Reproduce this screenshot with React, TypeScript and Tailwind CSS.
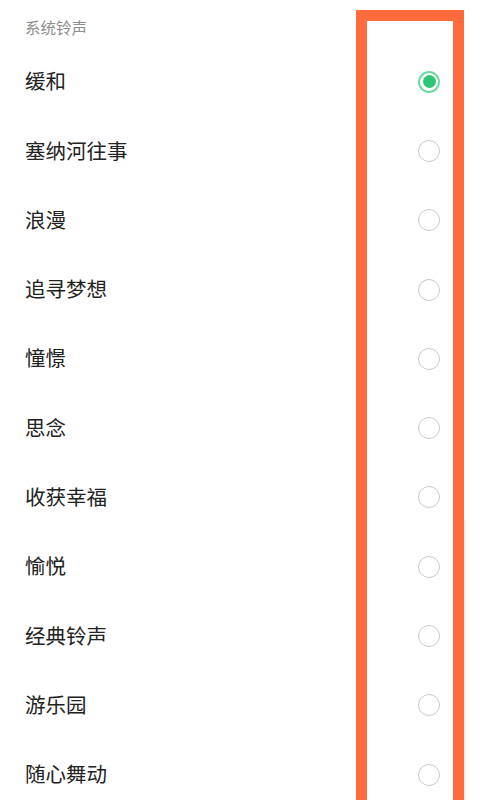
import React from "react";

const tones = [
  "缓和",
  "塞纳河往事",
  "浪漫",
  "追寻梦想",
  "憧憬",
  "思念",
  "收获幸福",
  "愉悦",
  "经典铃声",
  "游乐园",
  "随心舞动",
];

function Radio({ checked }: { checked: boolean }) {
  if (checked) {
    return (
      <span className="flex h-[22px] w-[22px] items-center justify-center rounded-full border-[2px] border-[#6fd9a0] bg-white">
        <span className="h-[13px] w-[13px] rounded-full bg-[#2ec673]" />
      </span>
    );
  }
  return <span className="block h-[22px] w-[22px] rounded-full border-[1.5px] border-[#cacaca] bg-white" />;
}

export default function App() {
  return (
    <div
      className="relative h-[800px] w-[479px] overflow-hidden bg-white"
      style={{ fontFamily: '"Noto Sans", "Noto Sans CJK SC", sans-serif' }}
    >
      <div className="flex h-[47px] items-center pl-[25px] pt-[10px] text-[15.5px] text-[#8c8c8c]">系统铃声</div>
      <ul>
        {tones.map((t, i) => (
          <li key={t} className="flex h-[69.3px] items-center justify-between pl-[25px] pr-[39px]">
            <span className="text-[20.5px] text-[#222222]">{t}</span>
            <Radio checked={i === 0} />
          </li>
        ))}
      </ul>
      {/* scroll indicator */}
      <div className="absolute left-[464px] top-[520px] h-[280px] w-[2px] bg-[#eeeeee]" />
      {/* highlight frame */}
      <div className="absolute left-[356px] top-[10px] h-[820px] w-[108px] border-[11px] border-[#ff6b3d]" />
    </div>
  );
}
